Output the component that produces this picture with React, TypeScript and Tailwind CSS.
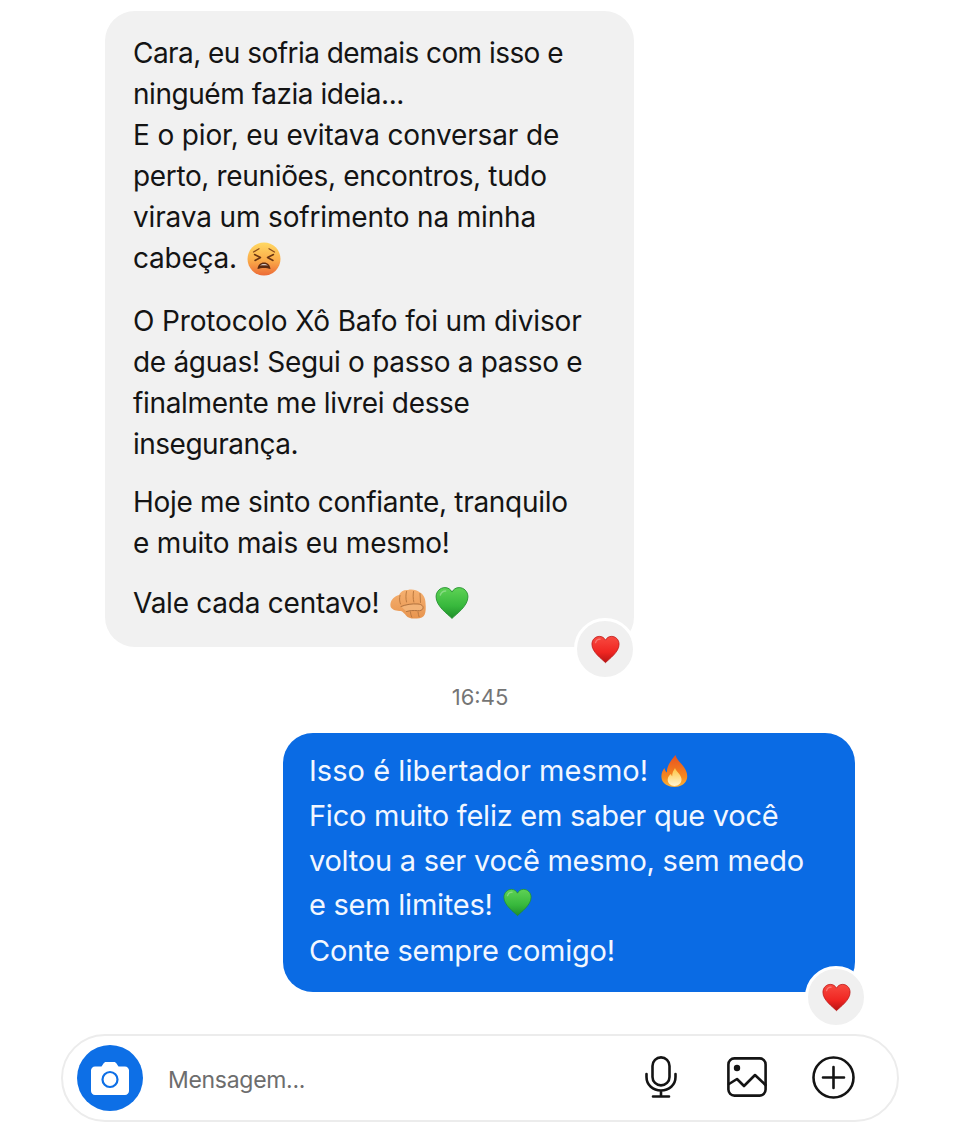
import React from "react";

function Heart({ c1, c2, c3, id, size }: { c1: string; c2: string; c3: string; id: string; size: number }) {
  return (
    <svg width={size} height={size} viewBox="0 0 32 32" className="block">
      <defs>
        <linearGradient id={id} x1="0" y1="0" x2="0" y2="1">
          <stop offset="0" stopColor={c1} />
          <stop offset="0.6" stopColor={c2} />
          <stop offset="1" stopColor={c3} />
        </linearGradient>
      </defs>
      <path d="M16 30.500C12 26.500 1 19 1 10.200 1 5 5 1.500 9.300 1.500c3 0 5.300 1.500 6.700 4.200 1.400-2.700 3.700-4.200 6.700-4.200C27 1.500 31 5 31 10.200 31 19 20 26.500 16 30.500Z" fill={`url(#${id})`} stroke={c3} strokeWidth="0.8" />
      <path d="M5 8.500C5.800 5.800 8 4.600 10 4.600" stroke="#ffffff" strokeOpacity="0.3" strokeWidth="1.400" fill="none" strokeLinecap="round" />
    </svg>
  );
}

function Tired() {
  return (
    <svg width="34" height="34" viewBox="0 0 34 34" className="block">
      <defs>
        <linearGradient id="tiredFace" x1="0" y1="0" x2="0" y2="1">
          <stop offset="0" stopColor="#ffd862" />
          <stop offset="0.55" stopColor="#fbab49" />
          <stop offset="1" stopColor="#ec6a36" />
        </linearGradient>
      </defs>
      <circle cx="17" cy="17" r="16.500" fill="url(#tiredFace)" />
      <path d="M6.500 10 12 6.800M27.500 10 22 6.800" stroke="#8a4a1c" strokeWidth="1.300" strokeLinecap="round" />
      <path d="M7.500 12.500 13.500 15.500 8 18.500M26.500 12.500 20.500 15.500 26 18.500" stroke="#6a3412" strokeWidth="1.500" fill="none" strokeLinecap="round" strokeLinejoin="round" />
      <path d="M10.500 27C11 22.800 13.500 20.500 17 20.500s6 2.300 6.500 6.500C20 25.500 14 25.500 10.500 27Z" fill="#5c2a10" />
      <path d="M13 23.500C15 21.800 19 21.800 21 23.500 19 23 15 23 13 23.500Z" fill="#ffffff" />
    </svg>
  );
}

function Fist() {
  return (
    <svg width="36" height="30" viewBox="0 0 36 30" className="block">
      <defs>
        <linearGradient id="fistFill" x1="0" y1="0" x2="0" y2="1">
          <stop offset="0" stopColor="#f5b070" />
          <stop offset="1" stopColor="#e8954f" />
        </linearGradient>
      </defs>
      <path d="M.5 14.500C1 11 4.500 7 9 6 10.500 2.500 14 .5 18 1c4-1 9 0 12 2.500 3.500 2 5.500 6 5.500 10.500 .5 5 .3 9-.8 11.500C33.500 28.500 30 29.800 25.500 29.500c-4 .3-7.500-.5-9.500-3-1.500-2-3-3.500-5-4.500-4.500 0-8.500-1-10-3.500C.3 17 .3 15.500.5 14.500Z" fill="url(#fistFill)" />
      <path d="M10 6.500c-.8 3-.5 6 .5 8.500M16.500 2.500c-.8 3.500-.8 7 0 10.500M23.500 2.500c-.5 3.500-.5 7 .3 10.500M30 4.500c.3 3 .3 6 .5 9" stroke="#bd7a40" strokeWidth="1" fill="none" strokeLinecap="round" />
      <path d="M11 17.500c5-2 11-3 17-2.500 3.500.3 5.500 2 5 4.200-.5 2-3 2.800-5.500 2.500-4-.4-7.500-.2-11 .8" fill="#f3b377" stroke="#b0703c" strokeWidth="1" strokeLinecap="round" />
      <path d="M20.500 22.500c0 2 .5 4 1.500 6M28 22.500c.2 2 .5 4 1.200 5.500" stroke="#b0703c" strokeWidth="0.800" fill="none" />
    </svg>
  );
}

function Fire() {
  return (
    <svg width="27" height="32" viewBox="0 0 27 32" className="block">
      <defs>
        <linearGradient id="fireOuter" x1="0" y1="0" x2="0" y2="1">
          <stop offset="0" stopColor="#e8501f" />
          <stop offset="0.7" stopColor="#f58a1f" />
          <stop offset="1" stopColor="#fbb43a" />
        </linearGradient>
        <linearGradient id="fireInner" x1="0" y1="0" x2="0" y2="1">
          <stop offset="0" stopColor="#fdc33f" />
          <stop offset="1" stopColor="#fff6d2" />
        </linearGradient>
      </defs>
      <path d="M14.500 0C15.500 5 21 8.500 23.500 13c2.500 4 3.500 8 2 12-1.500 4-6 7-12 7S2.500 29 1 25C-.5 20.500 1 16 3.500 13c.5 2 1 3.500 2.500 4.500C5.500 11.500 9.500 6 14.500 0Z" fill="url(#fireOuter)" />
      <path d="M14 13c1 3.500 6 6 6.500 11 .3 4-3 7-7 7s-7-3-6.800-6.500c.2-3 2-4.500 3.300-5.500.2 1 .5 1.800 1.200 2.300C11 18 12.500 15.500 14 13Z" fill="url(#fireInner)" />
    </svg>
  );
}

function Reaction({ className, id }: { className: string; id: string }) {
  return (
    <div className={`absolute flex h-[62px] w-[62px] items-center justify-center rounded-full border-[3px] border-white bg-[#f0f0f0] ${className}`}>
      <Heart id={id} c1="#f84a40" c2="#f02622" c3="#b81414" size={29} />
    </div>
  );
}

function GreenHeart({ size, id }: { size: number; id: string }) {
  return <Heart id={id} c1="#5ed255" c2="#37b83c" c3="#1f8e2a" size={size} />;
}

const line = "flex items-center whitespace-nowrap";

export default function App() {
  return (
    <div className="flex h-[1144px] w-[960px] flex-col bg-white pt-[11px] font-['Inter','Liberation_Sans',sans-serif] antialiased">
      <div className="relative ml-[105px] h-[636px] w-[529px] rounded-[30px] bg-[#f1f1f1] pl-[28px] pt-[22px] text-[28px] leading-[41px] tracking-[-0.25px] text-[#141414]">
        <div className={`${line} tracking-[-0.55px]`}>Cara, eu sofria demais com isso e</div>
        <div className={`${line} tracking-[-0.45px]`}>ninguém fazia ideia...</div>
        <div className={`${line} tracking-[-0.15px]`}>E o pior, eu evitava conversar de</div>
        <div className={`${line} tracking-[-0.35px]`}>perto, reuniões, encontros, tudo</div>
        <div className={`${line} tracking-[-0.15px]`}>virava um sofrimento na minha</div>
        <div className={`${line} gap-[10px]`}>cabeça. <Tired /></div>
        <div className={`${line} mt-[22px] tracking-[-0.15px]`}>O Protocolo Xô Bafo foi um divisor</div>
        <div className={`${line} tracking-[-0.3px]`}>de águas! Segui o passo a passo e</div>
        <div className={`${line} tracking-[-0.33px]`}>finalmente me livrei desse</div>
        <div className={`${line} tracking-[-0.5px]`}>insegurança.</div>
        <div className={`${line} mt-[17px] tracking-[-0.3px]`}>Hoje me sinto confiante, tranquilo</div>
        <div className={`${line} tracking-[-0.2px]`}>e muito mais eu mesmo!</div>
        <div className={`${line} mt-[19px] gap-[11px]`}>
          Vale cada centavo!
          <Fist />
          <span className="-ml-[2px] -mt-[2px]"><GreenHeart id="heartGreenA" size={34} /></span>
        </div>
        <Reaction id="heartRedA" className="-bottom-[33px] right-[-2px]" />
      </div>

      <div className="mt-[37px] text-center text-[22px] leading-[26px] text-[#757575]">16:45</div>

      <div className="relative ml-[283px] mt-[23px] h-[259px] w-[572px] rounded-[30px] bg-[#0a6be4] pl-[26px] pt-[16px] text-[29px] tracking-[-0.25px] text-[#f2f7ff]">
        <div className={`${line} h-[44px] gap-[13px] tracking-[0.05px]`}>Isso é libertador mesmo! <Fire /></div>
        <div className={`${line} h-[45px]`}>Fico muito feliz em saber que você</div>
        <div className={`${line} h-[45px]`}>voltou a ser você mesmo, sem medo</div>
        <div className={`${line} h-[43px] gap-[10px]`}>e sem limites! <span className="-mt-[4px]"><GreenHeart id="heartGreenB" size={29} /></span></div>
        <div className={`${line} h-[50px]`}>Conte sempre comigo!</div>
        <Reaction id="heartRedB" className="-bottom-[36px] right-[-12px]" />
      </div>

      <div className="ml-[61px] mt-[42px] flex h-[88px] w-[838px] items-center rounded-full border-2 border-[#ececec] bg-white pl-[14px]">
        <div className="flex h-[66px] w-[66px] items-center justify-center rounded-full bg-[#0d6fe6]">
          <svg width="38" height="33" viewBox="0 0 38 33" className="block">
            <path d="M4 4.500h6.500l2-3C13 .6 14 0 15 0h8c1 0 2 .6 2.500 1.500l2 3H34c2.200 0 4 1.800 4 4V29c0 2.200-1.800 4-4 4H4c-2.200 0-4-1.800-4-4V8.500c0-2.200 1.800-4 4-4Z" fill="#ffffff" />
            <circle cx="19" cy="17.500" r="7.500" fill="none" stroke="#0d6fe6" strokeWidth="2.200" />
          </svg>
        </div>
        <span className="ml-[25px] mt-[4px] text-[23px] tracking-[-0.3px] text-[#6d6d6d]">Mensagem...</span>
        <div className="-mt-[2px] ml-auto mr-[42px] flex items-center">
          <svg width="32" height="42" viewBox="0 0 32 42" fill="none" stroke="#141414" strokeWidth="2.600" strokeLinecap="round" className="block">
            <rect x="7.500" y="1.400" width="17" height="28" rx="8.500" />
            <path d="M1.500 18v3c0 8 6.500 13.500 14.500 13.500S30.500 29 30.500 21v-3M16 34.500v6M8 40.500h16" />
          </svg>
          <svg width="40" height="40" viewBox="0 0 40 40" fill="none" stroke="#141414" strokeWidth="2.600" strokeLinejoin="round" strokeLinecap="round" className="ml-[50px] block">
            <rect x="1.400" y="1.400" width="37.200" height="37.200" rx="6" />
            <path d="M2 27l8-5 7 7 11-11 10.500 10" />
            <circle cx="10" cy="11" r="3.200" fill="#141414" stroke="none" />
          </svg>
          <svg width="43" height="43" viewBox="0 0 43 43" fill="none" stroke="#141414" strokeWidth="2.600" strokeLinecap="round" className="ml-[45px] block">
            <circle cx="21.500" cy="21.500" r="20" />
            <path d="M21.500 11v21M11 21.500h21" />
          </svg>
        </div>
      </div>
    </div>
  );
}
